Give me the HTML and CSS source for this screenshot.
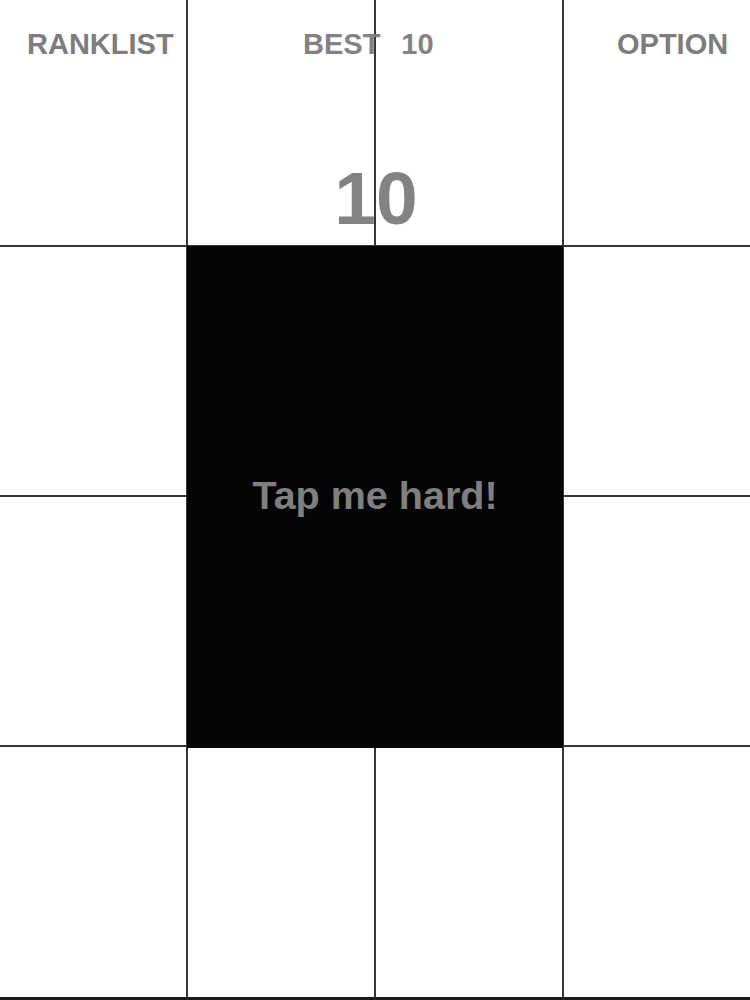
FILE: index.html
```html
<!DOCTYPE html>
<html>
<head>
<meta charset="utf-8">
<link rel="stylesheet" href="styles.css">
</head>
<body>
<div class="screen">
  <div class="cells">
    <div class="cell"></div><div class="cell"></div><div class="cell"></div><div class="cell last-col"></div>
    <div class="cell"></div><div class="cell"></div><div class="cell"></div><div class="cell last-col"></div>
    <div class="cell"></div><div class="cell"></div><div class="cell"></div><div class="cell last-col"></div>
    <div class="cell last-row"></div><div class="cell last-row"></div><div class="cell last-row"></div><div class="cell last-row last-col"></div>
  </div>
  <div class="layer">
    <div class="label ranklist">RANKLIST</div>
    <div class="label best"><span>BEST</span><span class="best-num">10</span></div>
    <div class="label option">OPTION</div>
    <div class="score">10</div>
    <div class="tap"><span class="tap-text">Tap me hard!</span></div>
  </div>
</div>
</body>
</html>
```
FILE: styles.css
```css
html, body {
  margin: 0;
  padding: 0;
  background: #ffffff;
}
body {
  font-family: "Liberation Sans", Arial, sans-serif;
  width: 750px;
  height: 1000px;
  overflow: hidden;
}
.screen {
  display: grid;
  width: 750px;
  height: 1000px;
}
.cells, .layer {
  grid-area: 1 / 1;
  display: grid;
  grid-template-columns: 188px 188px 188px 186px;
  grid-template-rows: 247px 250px 250px 253px;
}
.cell {
  box-sizing: border-box;
  border-right: 2px solid #353535;
  border-bottom: 2px solid #353535;
}
.cell.last-col {
  border-right: none;
}
.cell.last-row {
  border-bottom: 3px solid #1a1a1a;
}
.label {
  font-weight: bold;
  font-size: 29px;
  line-height: 29px;
  color: #7d7d7d;
  align-self: start;
  justify-self: start;
  margin-top: 30px;
  white-space: nowrap;
  position: relative;
  z-index: 2;
}
.ranklist {
  grid-column: 1;
  grid-row: 1;
  margin-left: 27px;
}
.best {
  grid-column: 2 / 4;
  grid-row: 1;
  margin-left: 115px;
  opacity: 0.95;
}
.best-num {
  margin-left: 21px;
}
.option {
  grid-column: 4;
  grid-row: 1;
  margin-left: 53px;
}
.score {
  grid-column: 2 / 4;
  grid-row: 1;
  justify-self: center;
  align-self: start;
  margin-top: 161px;
  font-weight: bold;
  font-size: 75px;
  line-height: 75px;
  color: #7d7d7d;
  position: relative;
  z-index: 2;
  opacity: 0.95;
}
.tap {
  grid-column: 2 / 4;
  grid-row: 2 / 4;
  margin: -1px 1px -1px -1px;
  background: #050407;
  display: flex;
  align-items: center;
  justify-content: center;
}
.tap-text {
  font-weight: bold;
  font-size: 39.5px;
  line-height: 40px;
  color: #7f7f7f;
  margin-top: -4px;
}
```
